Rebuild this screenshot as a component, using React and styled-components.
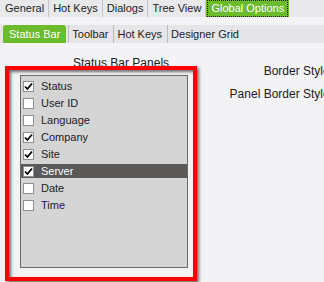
import React from 'react';
import styled, { createGlobalStyle } from 'styled-components';

const green = '#6bbb2d';

const GlobalStyle = createGlobalStyle`
  html, body {
    margin: 0;
    padding: 0;
    background: #f3f3f5;
    overflow: hidden;
  }
  body {
    font-family: "Liberation Sans", Arial, sans-serif;
    color: #1b1b22;
  }
`;

const Page = styled.div`
  width: 333px;
  height: 282px;
  display: flex;
  flex-direction: column;
`;

const TopTabs = styled.div`
  display: flex;
  height: 17px;
  background: #e9e9eb;
  padding-left: 1px;
`;

const TopTab = styled.div`
  font-size: 11px;
  line-height: 17px;
  padding: ${p => (p.$active ? '0 1px' : '0 4px')};
  border-right: ${p => (p.$active ? 'none' : '1px solid #c6c6c8')};
  background: ${p => (p.$active ? green : 'transparent')};
  color: ${p => (p.$active ? '#fff' : '#1b1b22')};
  white-space: nowrap;
`;

const FocusText = styled.span`
  display: block;
  line-height: 15px;
  padding: 0 3px;
  border: 1px dotted #1a1a1a;
`;

const SubTabs = styled.div`
  display: flex;
  height: 18px;
  margin-top: 8px;
  padding-left: 3px;
  background: #e6e6e8;
`;

const SubTab = styled.div`
  font-size: 11px;
  line-height: 18px;
  white-space: nowrap;
  padding: ${p => (p.$active ? '0 6px' : '0 3px')};
  margin-left: ${p => (p.$first ? '0' : '2px')};
  border-left: ${p => (p.$active || p.$first ? 'none' : '1px solid #bdbdc0')};
  border-radius: ${p => (p.$active ? '3px 3px 0 0' : '0')};
  background: ${p => (p.$active ? green : 'transparent')};
  color: ${p => (p.$active ? '#fff' : '#1b1b22')};
`;

const Content = styled.div`
  position: relative;
  flex: 1;
  display: flex;
  margin-top: 13px;
`;

const LeftCol = styled.div`
  margin-left: 20px;
  width: 168px;
  display: flex;
  flex-direction: column;
`;

const SectionLabel = styled.div`
  font-size: 12px;
  line-height: 14px;
  height: 14px;
  padding-left: 53px;
  margin-bottom: 5px;
  white-space: nowrap;
`;

const PanelList = styled.div`
  height: 193px;
  box-sizing: border-box;
  border: 1px solid #6a6a6c;
  background: #d5d5d5;
  padding-top: 3px;
  display: flex;
  flex-direction: column;
  gap: 3px;
`;

const Item = styled.div`
  display: flex;
  align-items: center;
  gap: 7px;
  height: 14px;
  padding-left: 2px;
  font-size: 11px;
  background: ${p => (p.$selected ? '#5b5957' : 'transparent')};
  color: ${p => (p.$selected ? '#fff' : '#1b1b22')};
`;

const Box = styled.span`
  width: 11px;
  height: 11px;
  box-sizing: border-box;
  border: 1px solid #8e8f8f;
  background: #fff;
  display: flex;
  align-items: center;
  justify-content: center;
  flex: none;
`;

const RightCol = styled.div`
  flex: 1;
  display: flex;
  flex-direction: column;
  align-items: flex-end;
  gap: 9px;
  padding-top: 8px;
`;

const FieldLabel = styled.div`
  font-size: 12px;
  line-height: 14px;
  white-space: nowrap;
`;

const Annotation = styled.div`
  position: absolute;
  left: 5px;
  top: 10px;
  width: 192px;
  height: 215px;
  box-sizing: border-box;
  border: 4px solid #ff0000;
  box-shadow: 2px 2px 3px rgba(0, 0, 0, 0.55), inset 2px 2px 3px rgba(0, 0, 0, 0.55);
  pointer-events: none;
`;

const topTabs = ['General', 'Hot Keys', 'Dialogs', 'Tree View', 'Global Options'];
const subTabs = ['Status Bar', 'Toolbar', 'Hot Keys', 'Designer Grid'];
const panels = [
  { label: 'Status', checked: true },
  { label: 'User ID', checked: false },
  { label: 'Language', checked: false },
  { label: 'Company', checked: true },
  { label: 'Site', checked: true },
  { label: 'Server', checked: true, selected: true },
  { label: 'Date', checked: false },
  { label: 'Time', checked: false },
];

const Check = () => (
  <svg width="9" height="9" viewBox="0 0 9 9">
    <path d="M1 4.5 L3.4 7 L8 1.5" fill="none" stroke="#000" strokeWidth="1.8" />
  </svg>
);

const App = () => (
  <Page>
    <GlobalStyle />
    <TopTabs>
      {topTabs.map(t =>
        t === 'Global Options' ? (
          <TopTab key={t} $active>
            <FocusText>{t}</FocusText>
          </TopTab>
        ) : (
          <TopTab key={t}>{t}</TopTab>
        )
      )}
    </TopTabs>
    <SubTabs>
      {subTabs.map((t, i) => (
        <SubTab key={t} $active={i === 0} $first={i === 0}>
          {t}
        </SubTab>
      ))}
    </SubTabs>
    <Content>
      <LeftCol>
        <SectionLabel>Status Bar Panels</SectionLabel>
        <PanelList>
          {panels.map(p => (
            <Item key={p.label} $selected={p.selected}>
              <Box>{p.checked && <Check />}</Box>
              {p.label}
            </Item>
          ))}
        </PanelList>
      </LeftCol>
      <RightCol>
        <FieldLabel>Border Style:</FieldLabel>
        <FieldLabel>Panel Border Style:</FieldLabel>
      </RightCol>
      <Annotation />
    </Content>
  </Page>
);

export default App;
